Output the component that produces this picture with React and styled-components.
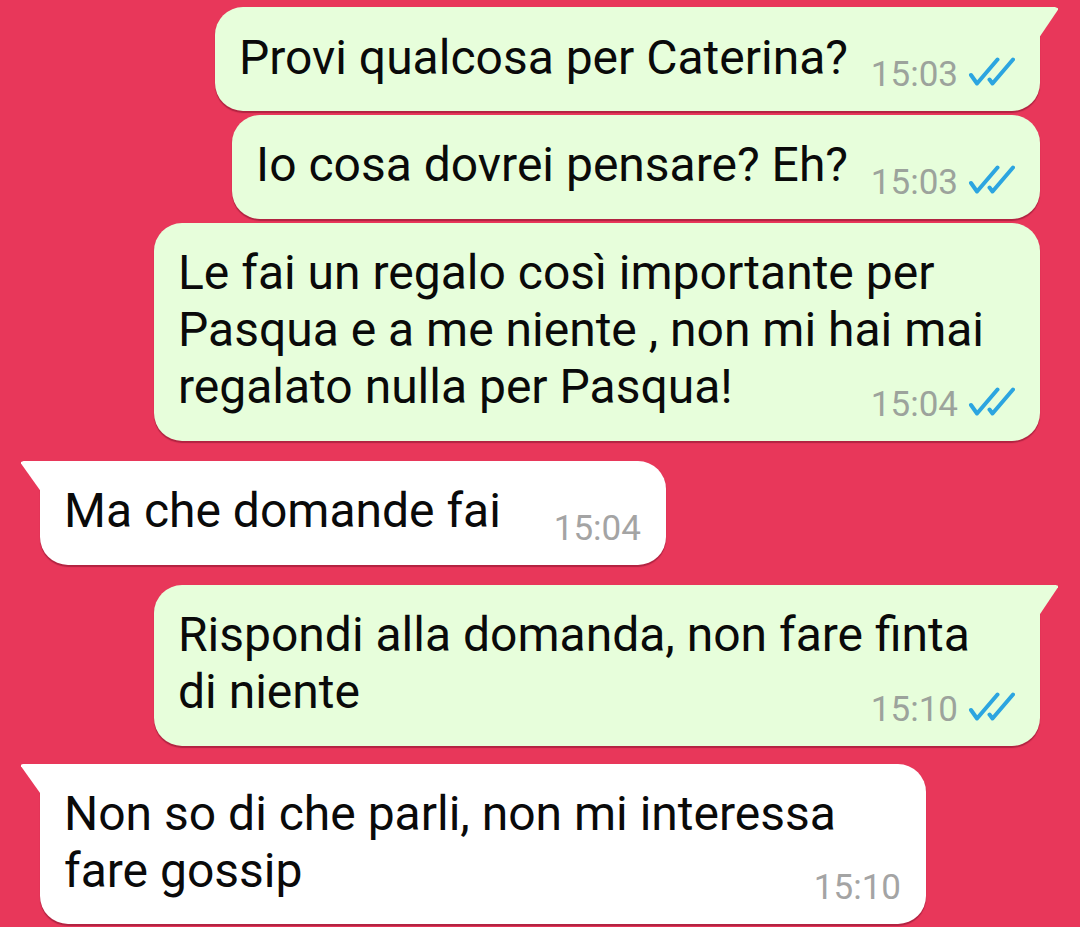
import React from 'react';
import styled, { createGlobalStyle, css } from 'styled-components';

const GlobalStyle = createGlobalStyle`
  html, body {
    margin: 0;
    padding: 0;
    background: #E8375A;
  }
  body {
    font-family: Roboto, "Noto Sans", "Liberation Sans", sans-serif;
    -webkit-font-smoothing: antialiased;
  }
`;

const Chat = styled.div`
  display: flex;
  flex-direction: column;
  box-sizing: border-box;
  min-height: 927px;
  padding: 7px 40px 0;
  background: #E8375A;
  overflow: hidden;
`;

const outTail = css`
  border-top-right-radius: 0;
  &::before {
    content: '';
    position: absolute;
    top: 0;
    right: -18px;
    width: 19px;
    height: 30px;
    background: inherit;
    clip-path: polygon(0 0, 84% 0, 100% 4%, 100% 9%, 3% 100%, 0 100%);
  }
`;

const inTail = css`
  border-top-left-radius: 0;
  &::before {
    content: '';
    position: absolute;
    top: 0;
    left: -19px;
    width: 20px;
    height: 30px;
    background: inherit;
    clip-path: polygon(16% 0, 100% 0, 100% 100%, 97% 100%, 0 9%, 0 4%);
  }
`;

const Bubble = styled.div`
  position: relative;
  align-self: ${(p) => (p.$out ? 'flex-end' : 'flex-start')};
  box-sizing: border-box;
  max-width: 886px;
  margin-top: ${(p) => p.$mt}px;
  padding: 21.5px 25px 16px 24px;
  background: ${(p) => (p.$out ? '#E7FEDB' : '#FFFFFF')};
  border-radius: 28px;
  box-shadow: 0 1.5px 1px rgba(110, 10, 35, 0.45);
  ${(p) => p.$tail && (p.$out ? outTail : inTail)}
`;

const Text = styled.p`
  margin: 0;
  font-size: 48px;
  line-height: 57px;
  color: #0a0a0a;
`;

const Spacer = styled.span`
  display: inline-block;
  width: ${(p) => p.$w}px;
  height: 1px;
`;

const Meta = styled.div`
  display: flex;
  justify-content: flex-end;
  align-items: center;
  gap: 10px;
  height: 40px;
  margin-top: -30.6px;
`;

const Time = styled.span`
  font-size: 35px;
  line-height: 40px;
  color: ${(p) => (p.$out ? '#9CA39C' : '#A4A4A4')};
`;

const Ticks = styled.svg`
  display: block;
  margin-bottom: 6px;
`;

const ReadTicks = () => (
  <Ticks width="47" height="30" viewBox="0 0 47 30">
    <path
      d="M3 18 L9 26.5 L29.5 2.5 M21.5 22.5 L24.5 26.5 L45 2.5"
      stroke="#2CA5E0"
      strokeWidth="4"
      fill="none"
      strokeLinecap="round"
      strokeLinejoin="round"
    />
  </Ticks>
);

const messages = [
  { out: true, tail: true, mt: 0, text: 'Provi qualcosa per Caterina?', time: '15:03' },
  { out: true, mt: 4, text: 'Io cosa dovrei pensare? Eh?', time: '15:03' },
  {
    out: true,
    mt: 4,
    text: 'Le fai un regalo così importante per Pasqua e a me niente , non mi hai mai regalato nulla per Pasqua!',
    time: '15:04',
  },
  { out: false, tail: true, mt: 20, text: 'Ma che domande fai', time: '15:04' },
  { out: true, tail: true, mt: 20, text: 'Rispondi alla domanda, non fare finta di niente', time: '15:10' },
  { out: false, tail: true, mt: 18, text: 'Non so di che parli, non mi interessa fare gossip', time: '15:10' },
];

export default function App() {
  return (
    <>
      <GlobalStyle />
      <Chat>
        {messages.map((m, i) => (
          <Bubble key={i} $out={m.out} $tail={m.tail} $mt={m.mt}>
            <Text>
              {m.text}
              <Spacer $w={m.out ? 167 : 140} />
            </Text>
            <Meta>
              <Time $out={m.out}>{m.time}</Time>
              {m.out && <ReadTicks />}
            </Meta>
          </Bubble>
        ))}
      </Chat>
    </>
  );
}
